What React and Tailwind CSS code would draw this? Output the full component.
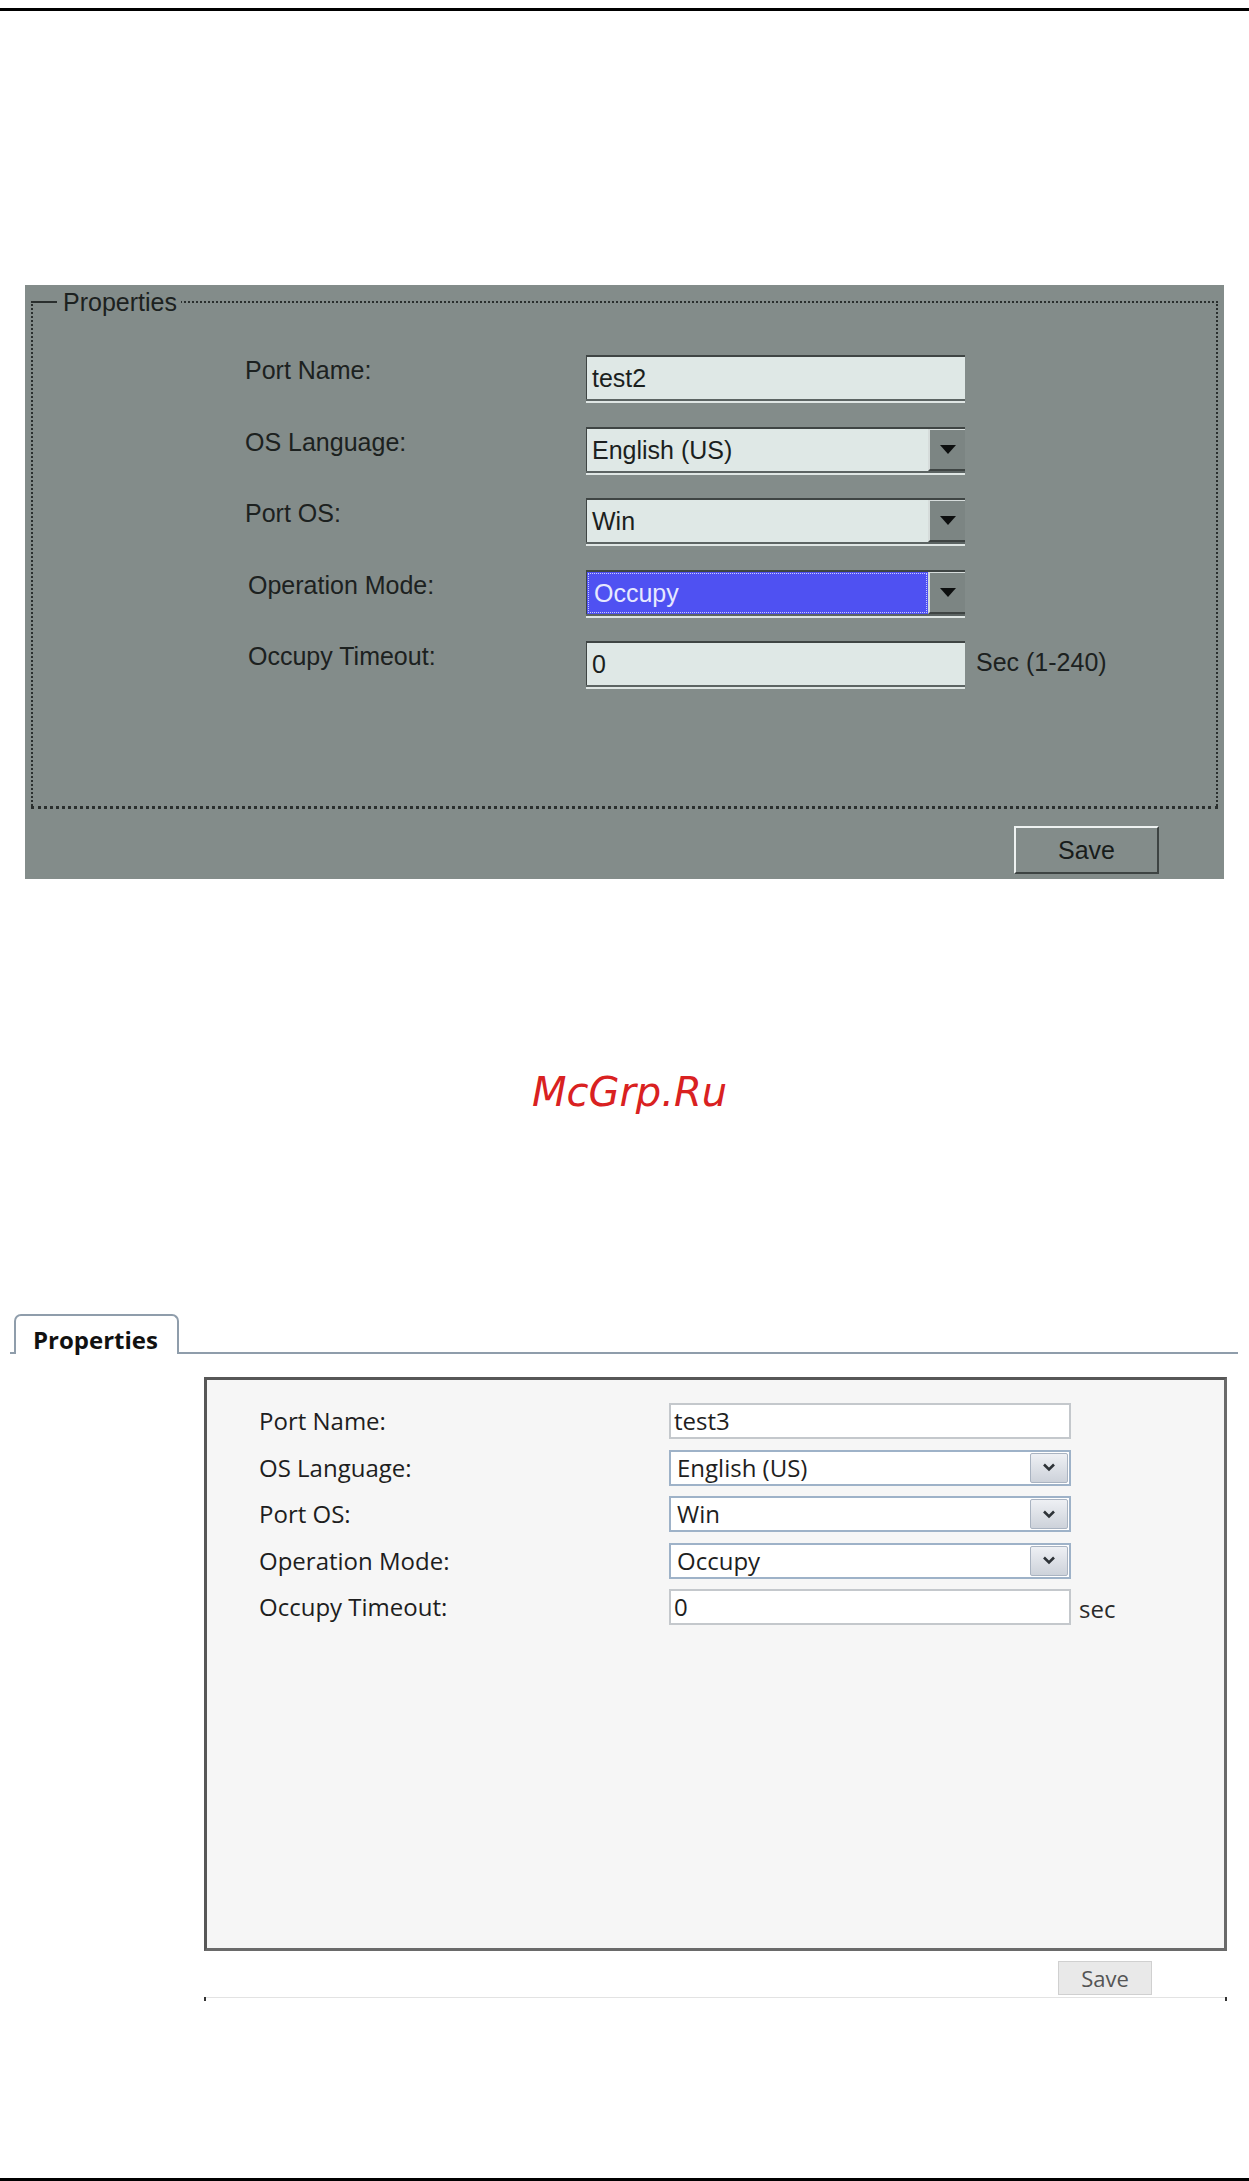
import React from "react";

const winFont = { fontFamily: '"Liberation Sans", Arial, sans-serif' };
const webFont = { fontFamily: '"Open Sans", "Noto Sans", sans-serif' };

/* ---------- Desktop client dialog (grey panel) ---------- */

function ClassicField({ value, select = false, selected = false, width = "w-[379px]" }) {
  return (
    <div
      className={`${width} h-[44px] flex border-t-2 border-l border-[#3f4544] shadow-[0_2px_0_#5c6463,0_4px_0_#dfe6e4] ${
        selected ? "bg-[#4f51f2]" : "bg-[#dfe8e6]"
      }`}
    >
      <div
        className={`flex-1 flex items-center pl-[5px] text-[25px] leading-[30px] ${
          selected
            ? "text-[#e6e8ff] m-[2px] outline-1 outline-dotted outline-[#c9ccff] pl-[3px]"
            : "text-[#1b1f1e]"
        }`}
      >
        {value}
      </div>
      {select && (
        <div className="w-[37px] h-full flex items-center justify-center bg-[#7c8583] border-l-2 border-t border-[#d6dcdb] border-b-2 border-b-[#3e4443]">
          <svg width="16" height="9" viewBox="0 0 16 9">
            <polygon points="0,0 16,0 8,9" fill="#0d0f0f" />
          </svg>
        </div>
      )}
    </div>
  );
}

function ClassicRow({ label, children, shift = false, extra }) {
  return (
    <div className="flex items-start">
      <div className={`w-[341px] text-[25px] leading-[30px] text-[#1c2120] ${shift ? "pl-[3px]" : ""}`}>
        {label}
      </div>
      {children}
      {extra && (
        <div className="ml-[11px] mt-[6px] text-[25px] leading-[30px] text-[#1c2120]">{extra}</div>
      )}
    </div>
  );
}

function ClassicDialog() {
  return (
    <div className="mt-[274px] ml-[25px] w-[1199px] h-[594px] bg-[#838c8a] flex flex-col" style={winFont}>
      <fieldset className="mx-[6px] mt-[2px] h-[522px] border-2 border-dotted border-[#2a2f2e] border-b-[3px]">
        <legend className="pr-[4px] text-[25px] leading-[30px] text-[#1c2120]">
          <span className="flex items-center">
            <span className="w-[24px] h-[2px] bg-[#2a2f2e]" />
            <span className="pl-[6px]">Properties</span>
          </span>
        </legend>
        <div className="pt-[38px] pl-[212px] flex flex-col gap-[27.5px]">
          <ClassicRow label="Port Name:">
            <ClassicField value="test2" />
          </ClassicRow>
          <ClassicRow label="OS Language:">
            <ClassicField value="English (US)" select />
          </ClassicRow>
          <ClassicRow label="Port OS:">
            <ClassicField value="Win" select />
          </ClassicRow>
          <ClassicRow label="Operation Mode:" shift>
            <ClassicField value="Occupy" select selected />
          </ClassicRow>
          <ClassicRow label="Occupy Timeout:" shift extra="Sec (1-240)">
            <ClassicField value="0" />
          </ClassicRow>
        </div>
      </fieldset>
      <div className="flex justify-end mt-[17px] mr-[65px]">
        <button className="w-[145px] h-[48px] bg-[#838c8a] border-t-2 border-l-2 border-[#eef2f1] border-r-2 border-b-2 border-r-[#3d4342] border-b-[#3d4342] text-[25px] leading-[30px] text-[#181c1b]">
          Save
        </button>
      </div>
    </div>
  );
}

/* ---------- Web interface panel ---------- */

function Chevron() {
  return (
    <svg width="14" height="9" viewBox="0 0 14 9">
      <polyline points="2,1.5 7,6.5 12,1.5" fill="none" stroke="#2e3338" strokeWidth="2.6" />
    </svg>
  );
}

function WebField({ value, select = false }) {
  return (
    <div
      className={`w-[402px] h-[36px] flex bg-white border-2 ${
        select ? "border-[#9eb2c8]" : "border-[#c4c8cc]"
      }`}
    >
      <div className={`flex-1 flex items-center ${select ? "pl-[6px]" : "pl-[3px]"} text-[24px] leading-[28px] text-[#1e1e1e]`}>
        {value}
      </div>
      {select && (
        <div className="w-[38px] my-[1px] mr-[1px] rounded-[2px] flex items-center justify-center bg-gradient-to-b from-[#eef0f4] to-[#cdd2da] border border-[#a9b3c1]">
          <Chevron />
        </div>
      )}
    </div>
  );
}

function WebRow({ label, children, extra }) {
  return (
    <div className="flex items-center">
      <div className="w-[410px] text-[24px] leading-[28px] text-[#1e1e1e]">{label}</div>
      {children}
      {extra && <div className="ml-[8px] mt-[4px] text-[24px] leading-[28px] text-[#2a2a2a]">{extra}</div>}
    </div>
  );
}

function WebPanel() {
  return (
    <div style={webFont}>
      <div className="mt-[198px] ml-[10px] w-[1228px] flex items-end border-b-2 border-[#8f9dab]">
        <div className="ml-[4px] -mb-[2px] h-[40px] w-[165px] bg-white border-2 border-b-0 border-[#8f9dab] rounded-t-[7px] pt-[10px] pl-[17px] text-[24px] leading-[28px] font-bold text-[#111]">
          Properties
        </div>
      </div>

      <div className="mt-[23px] ml-[204px] w-[1023px] h-[574px] bg-[#f6f6f6] border-[3px] border-[#575757] border-b-[#6a6a6a] border-r-[#6a6a6a]">
        <div className="pt-[23px] pl-[52px] flex flex-col gap-[10.5px]">
          <WebRow label="Port Name:">
            <WebField value="test3" />
          </WebRow>
          <WebRow label="OS Language:">
            <WebField value="English (US)" select />
          </WebRow>
          <WebRow label="Port OS:">
            <WebField value="Win" select />
          </WebRow>
          <WebRow label="Operation Mode:">
            <WebField value="Occupy" select />
          </WebRow>
          <WebRow label="Occupy Timeout:" extra="sec">
            <WebField value="0" />
          </WebRow>
        </div>
      </div>

      <div className="ml-[204px] w-[1023px] flex justify-end pr-[75px] mt-[10px]">
        <button className="w-[94px] h-[34px] bg-[#e9e9e9] border border-[#d0d0d0] text-[22px] leading-[28px] text-[#555]">
          Save
        </button>
      </div>
      <div className="ml-[204px] w-[1023px] flex items-start h-[4px] mt-[2px]">
        <span className="w-[2px] h-[4px] bg-[#333]" />
        <span className="flex-1 h-px bg-[#e3e3e3]" />
        <span className="w-[2px] h-[4px] bg-[#333]" />
      </div>
    </div>
  );
}

export default function App() {
  return (
    <div className="w-[1249px] h-[2181px] bg-white flex flex-col overflow-hidden">
      <div className="mt-[8px] h-[3px] bg-black" />

      <ClassicDialog />

      <div
        className="mt-[189px] pl-[10px] text-center text-[40px] leading-[48px] italic text-[#d92121]"
        style={{ fontFamily: '"DejaVu Sans", sans-serif' }}
      >
        McGrp.Ru
      </div>

      <WebPanel />

      <div className="mt-auto h-[3px] bg-black" />
    </div>
  );
}
